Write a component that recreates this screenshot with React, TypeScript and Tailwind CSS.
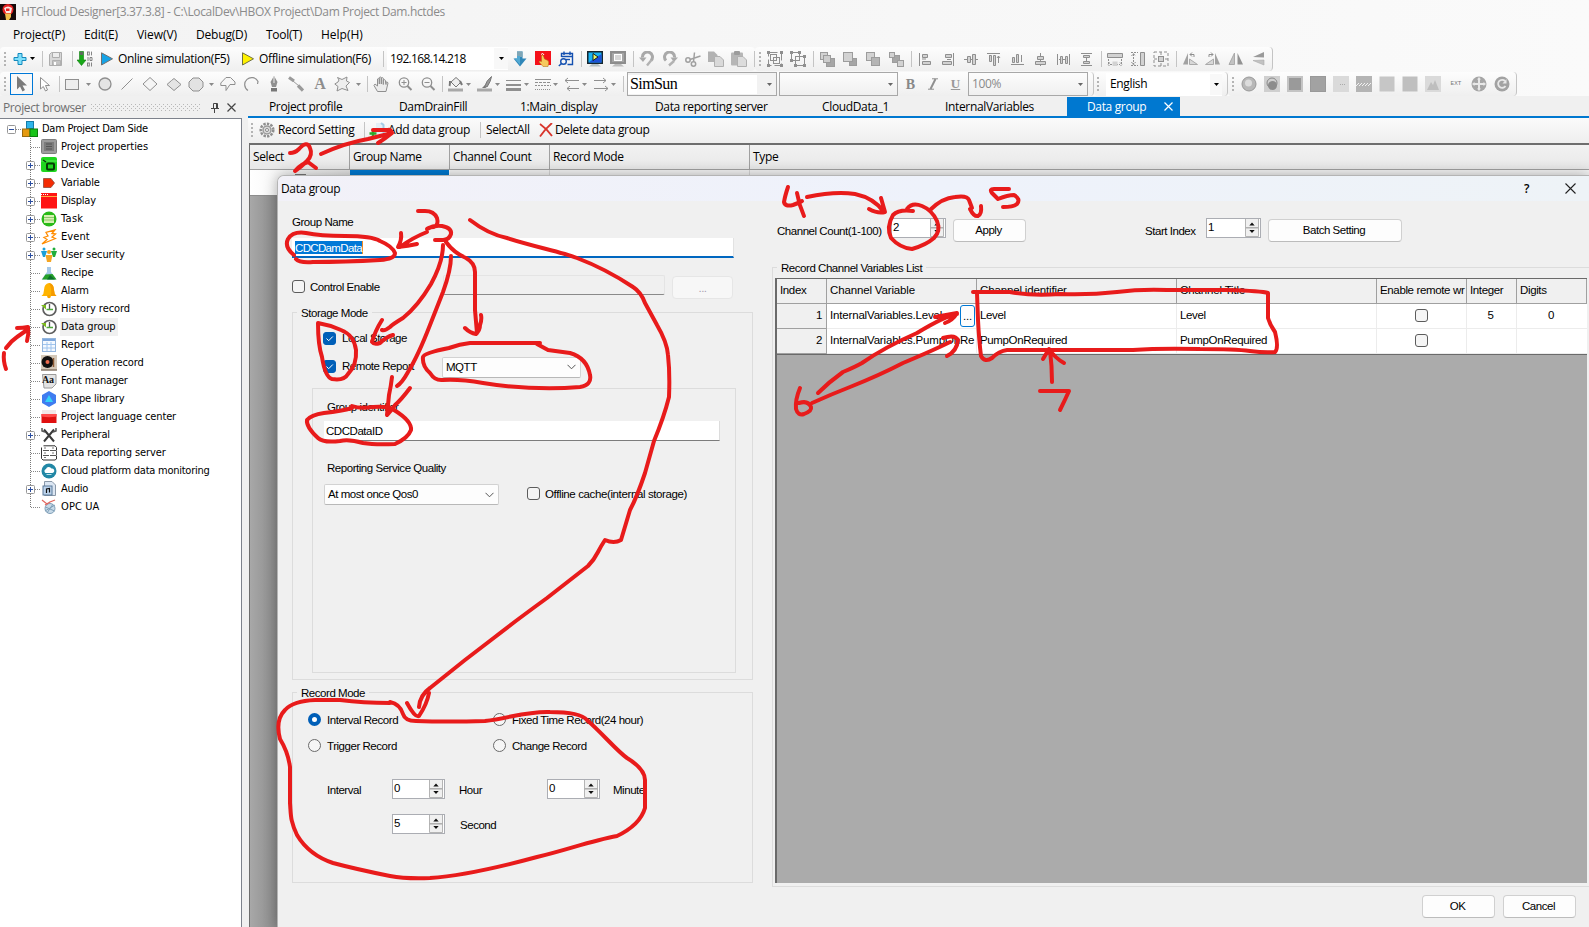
import type { ReactNode } from "react";

/* ---------- text styles ---------- */
const UI = "font-['Open_Sans','Noto_Sans',sans-serif] text-[12px] tracking-[-0.35px] whitespace-nowrap";
const SANS = "font-['Liberation_Sans',sans-serif] text-[11.5px] tracking-[-0.46px] whitespace-nowrap";
const TREE = "font-['DejaVu_Sans_Condensed','DejaVu_Sans',sans-serif] text-[11px] whitespace-nowrap";

/* ---------- small building blocks ---------- */
function Svg({ children, w = 16, h = 16, className = "" }: { children?: ReactNode; w?: number; h?: number; className?: string }) {
  return (
    <svg width={w} height={h} viewBox={`0 0 ${w} ${h}`} className={`block shrink-0 ${className}`} fill="none">
      {children}
    </svg>
  );
}

function Grip({ className = "" }: { className?: string }) {
  return (
    <Svg w={3} h={16} className={className}>
      {[0, 4, 8, 12].map((y) => (
        <rect key={y} x="0" y={y + 1} width="2" height="2" fill="#b4b4b4" />
      ))}
    </Svg>
  );
}

const Sep = ({ className = "ml-[7px] mr-[5px]" }: { className?: string }) => (
  <div className={`h-4 w-px shrink-0 bg-[#c4c4c4] ${className}`} />
);

const Group = ({ children, className = "" }: { children: ReactNode; className?: string }) => (
  <div className={`flex shrink-0 items-center gap-[7px] ${className}`}>{children}</div>
);

const Caret = ({ color = "#8a8a8a", className = "" }: { color?: string; className?: string }) => (
  <Svg w={5} h={3} className={className}>
    <path d="M0 0H5L2.5 3Z" fill={color} />
  </Svg>
);

const G = "#8f8f8f";
const L = "#d2d2d2";

/* ---------- first toolbar icons ---------- */
const Stack = ({ squares }: { squares: [number, number, number, string][] }) => (
  <Svg>
    {squares.map(([p, q, size, fill], i) => <rect key={i} x={p + 0.5} y={q + 0.5} width={size} height={size} fill={fill} stroke="#9c9c9c" />)}
  </Svg>
);

function Toolbar1() {
  return (
    <div className="flex h-[25px] items-center pr-2">
      <div className="flex h-6 shrink-0 items-center rounded-sm bg-gradient-to-b from-[#fdfdfd] to-[#efefef] pl-[4px]">
        <Grip />
        <Svg w={14} h={14} className="ml-[6px]">
          <path d="M5 1.5H9V5.5H13V8.5H9V12.5H5V8.5H1V5.5H5Z" fill="#7fe0fb" stroke="#1389bd" />
        </Svg>
        <Caret color="#000" className="ml-[3px]" />
        <Sep className="ml-[7px]" />
        <Svg className="ml-[5px]">
          <path d="M1.500 3.500L3.500 1.500H13.500V14.500H1.500Z" fill="#d8d8d8" stroke="#adadad" />
          <path d="M4.500 1.500H11.500V6.500H4.500Z" fill="#ececec" stroke="#adadad" />
          <path d="M4.500 9.500H12.500V14H4.500Z" fill="#c4c4c4" stroke="#b0b0b0" />
          <path d="M6 11H8V14H6Z" fill="#fff" />
        </Svg>
        <Sep className="ml-2" />
        <Svg className="ml-1">
          <path d="M2.500 0.500H6.500V9H9L4.500 14.500L0 9H2.500Z" fill="#18a818" stroke="#0c7a0c" strokeWidth=".6" />
          <path d="M3 1H6V4H3Z" fill="#5d6b5d" />
          <g stroke="#777" strokeWidth=".9">
            <rect x="10.500" y="1" width="1.800" height="3" /><path d="M14.500 .6V4.400M11 6V10M13 6.500H15V9.500H13ZM14.500 11.500V15.500" />
            <rect x="10.500" y="12" width="1.800" height="3" />
          </g>
        </Svg>
        <Svg w={14} h={14} className="ml-[7px]">
          <path d="M1.500 .8L12.500 6.800L1.500 13Z" fill="#16a3e6" stroke="#707070" />
        </Svg>
        <div className={`${UI} ml-1 w-[113px] tracking-[-0.22px]`}>Online simulation(F5)</div>
        <Svg w={14} h={14} className="ml-[10px]">
          <path d="M1.500 .8L12.500 6.800L1.500 13Z" fill="#fff200" stroke="#707040" />
        </Svg>
        <div className={`${UI} ml-1 w-[114px] tracking-[-0.2px]`}>Offline simulation(F6)</div>
        <Sep className="ml-[10px]" />
        <div className="ml-[3px] flex h-[23px] w-[121px] items-center justify-between bg-white pl-[3px]">
          <span className={`${UI} tracking-[-0.66px]`}>192.168.14.218</span>
          <span className="flex h-[21px] w-[14px] items-center justify-center bg-[#f8f8f8]"><Caret color="#000" /></span>
        </div>
        <Group className="ml-1">
          <Svg>
            <path d="M5 .5H10.500V7.500H14.500L8 15.500L1.500 7.500H5Z" fill="#2f86b8" />
            <path d="M5 .5H10.500V6H5Z" fill="#7fa6b6" />
            <path d="M5 5H8V14L2.500 7.500H5Z" fill="#51a9d3" />
          </Svg>
          <Svg>
            <rect width="16" height="14" fill="#f5101a" />
            <path d="M6 3.500Q8 1 9 4" stroke="#fff" />
            <path d="M6.500 4.500Q7.500 3.500 8.300 4.500L9.500 8L13 9.500Q14.500 11 13 15.500H8L4 11Q4 9.500 6.500 10.500Z" fill="#f6c95e" stroke="#a86a10" strokeWidth=".5" />
          </Svg>
          <Svg>
            <g stroke="#1450b0" strokeWidth="1.400"><path d="M3.500 6V2.500H14.500V13.500H9.500M3.500 5.500H14.500M6 .5V4M12 .5V4" /><circle cx="5.500" cy="10.500" r="2.800" /><path d="M3.500 12.500L.8 15" /><path d="M8 8.500H12" /></g>
          </Svg>
        </Group>
        <Sep />
        <Group>
          <Svg>
            <rect x="0" y="0" width="16" height="13" fill="#17262e" />
            <path d="M1.500 1.500H14.500V11.500H1.500Z" fill="#18b4f4" /><path d="M1.500 11.500L14.500 3V11.500Z" fill="#1c50d8" />
            <path d="M6 2.500L11 6L6 9.500Z" fill="#e8f86c" stroke="#111" strokeWidth=".9" />
            <path d="M5 13H11L14 15.500H2Z" fill="#b4c0c4" />
          </Svg>
          <Svg>
            <rect x="0" y="0" width="16" height="13" fill="#8d8d8d" /><rect x="2" y="2" width="12" height="9" fill="#a5a5a5" />
            <rect x="4.500" y="3.500" width="7" height="6" fill="#d6d6d6" stroke="#fff" /><path d="M5 13H11L14 15.500H2Z" fill="#bdbdbd" />
          </Svg>
        </Group>
        <Sep />
        <Group>
          <Svg><path d="M12 9.500A5 5 0 1 0 3.500 6.500" stroke="#a9a9a9" strokeWidth="3" /><path d="M0 6.500H7.500L4 11Z" fill="#a9a9a9" /><path d="M12.500 9L8 14.500" stroke="#b2b2b2" strokeWidth="2.400" /></Svg>
          <Svg><path d="M4 9.500A5 5 0 1 1 12.500 6.500" stroke="#a9a9a9" strokeWidth="3" /><path d="M16 6.500H8.500L12 11Z" fill="#a9a9a9" /><path d="M12 10L7 14.500" stroke="#b2b2b2" strokeWidth="2.400" /></Svg>
          <Svg><g stroke="#a0a0a0" strokeWidth="1.500"><circle cx="3" cy="9" r="2.200" /><circle cx="8.500" cy="13" r="2.200" /><path d="M5 8.500L15.500 5M8.500 11L9.500 1.500" /></g></Svg>
          <Svg><path d="M0 .5H6L9.500 4V11H0Z" fill="#b2b2b2" /><path d="M6.500 5.500H12L15.500 9V15.500H6.500Z" fill="#d9d9d9" stroke="#b0b0b0" /></Svg>
          <Svg><rect y="1.500" width="12" height="13" rx="1" fill="#b6b6b6" /><rect x="3" width="6" height="4" rx="1" fill="#9c9c9c" /><path d="M6.500 5.500H12L15.500 9V15.500H6.500Z" fill="#dcdcdc" stroke="#b0b0b0" /></Svg>
        </Group>
        <Sep className="ml-[7px]" />
      </div>
      <div className="flex h-6 shrink-0 items-center rounded-sm border-r border-[#c4c4c4] bg-gradient-to-b from-[#fdfdfd] to-[#efefef] pl-[4px] pr-[7px]">
        <Grip />
        <Group className="ml-[5px]">
          <Svg><g stroke={G}><path d="M1.500 1.500H14.500V14.500H1.500Z" strokeDasharray="9 3" /><rect x="3.500" y="3.500" width="6" height="6" /><rect x="6.500" y="6.500" width="6" height="6" /></g><path d="M0 0H3V3H0ZM13 0H16V3H13ZM0 13H3V16H0ZM13 13H16V16H13Z" fill={G} /></Svg>
          <Svg><g stroke={G}><rect x="1.500" y="1.500" width="8" height="8" /><rect x="5.500" y="5.500" width="9" height="9" /></g><path d="M0 0H3V3H0ZM8 0H11V3H8ZM0 8H3V11H0ZM13 4H16V7H13ZM4 13H7V16H4ZM13 13H16V16H13Z" fill={G} /></Svg>
        </Group>
        <Sep />
        <Group>
          <Stack squares={[[1, 1, 7, L], [7, 7, 8, "#a6a6a6"], [4, 4, 7, "#cdcdcd"]]} />
          <Stack squares={[[7, 7, 7, "#a6a6a6"], [1, 1, 9, L]]} />
          <Stack squares={[[1, 1, 8, L], [6, 6, 8, "#b4b4b4"]]} />
          <Stack squares={[[4, 4, 7, "#a6a6a6"], [1, 1, 5, L], [9, 9, 6, L]]} />
        </Group>
        <Sep />
        <Group>
          <Svg><path d="M2.500 2V15M5 4.500H11M5 8H9M5 12.500H13" stroke={G} /><path d="M5.500 3.500H10.500V6.500H5.500ZM5.500 10.500H13.500V13.500H5.500Z" fill={L} stroke={G} /></Svg>
          <Svg><path d="M13.500 2V15M7 8.500H11" stroke={G} /><path d="M5.500 3.500H11.500V6.500H5.500ZM2.500 10.500H11.500V13.500H2.500Z" fill={L} stroke={G} /></Svg>
          <Svg><path d="M1 8.500H15" stroke={G} /><path d="M4.500 5.500H7.500V11.500H4.500ZM9.500 3.500H12.500V13.500H9.500Z" fill={L} stroke={G} /></Svg>
          <Svg><path d="M1 2.500H14M3.500 4V8M12.500 5V12M11 7L12.500 5L14 7" stroke={G} /><path d="M7.500 4.500H9.500V14.500H7.500ZM3.500 4.500H5.500V10.500H3.500Z" fill={L} stroke={G} /></Svg>
          <Svg><path d="M2 13.500H15M12.500 4V11" stroke={G} /><path d="M7.500 3.500H9.500V11.500H7.500ZM3.500 6.500H5.500V11.500H3.500Z" fill={L} stroke={G} /></Svg>
          <Svg><path d="M8.500 2V15" stroke={G} /><path d="M5.500 5.500H11.500V8.500H5.500ZM3.500 10.500H13.500V13.500H3.500Z" fill={L} stroke={G} /></Svg>
          <Svg><path d="M2.500 3V14M14.500 3V14M4 8.500H13" stroke={G} /><path d="M5.500 5.500H7.500V12.500H5.500ZM10.500 5.500H12.500V12.500H10.500Z" fill={L} stroke={G} /></Svg>
          <Svg><path d="M3 2.500H14M3 14.500H14M8.500 4V13" stroke={G} /><path d="M5.500 4.500H11.500V6.500H5.500ZM5.500 10.500H11.500V12.500H5.500Z" fill={L} stroke={G} /></Svg>
        </Group>
        <Sep />
        <Group>
          <Svg><path d="M.5 2.500H15.500V6.500H.5Z" fill={L} stroke={G} /><path d="M1.500 8V13M14.500 8V13M3 13.500H13M3 11.500L1 13.500L3 15.500M13 11.500L15 13.500L13 15.500" stroke={G} strokeDasharray="2 1" /><path d="M5.500 10.500H10.500V15H5.500Z" fill={L} /></Svg>
          <Svg><path d="M10.500 1.500H14.500V14.500H10.500Z" fill={L} stroke={G} /><path d="M1 1.500H8M1 14.500H8M3.500 3V13M1.500 5L3.500 2.500L5.500 5M1.500 11L3.500 14L5.500 11" stroke={G} strokeDasharray="2 1" /></Svg>
          <Svg><rect x="1" y="1" width="14" height="14" stroke={G} strokeDasharray="3 2" /><rect x="5.500" y="5.500" width="5" height="5" fill={L} stroke={G} /><path d="M8 1V4M8 12V15M1 8H4M12 8H15" stroke={G} /></Svg>
        </Group>
        <Sep />
        <Group>
          <Svg><path d="M1 13.500L6 2V13.500Z" fill="#a2a2a2" /><path d="M7.500 8L15.500 13.500H7.500Z" fill="#d8d8d8" stroke="#aaa" /><path d="M8 3.500H12V6M10 1.500L8 3.500L10 5.500" stroke={G} /></Svg>
          <Svg><path d="M15 13.500L10 2V13.500Z" fill="#a2a2a2" /><path d="M8.500 8L.5 13.500H8.500Z" fill="#d8d8d8" stroke="#aaa" /><path d="M4 6V3.500H8M6 1.500L8 3.500L6 5.500" stroke={G} /></Svg>
          <Svg><path d="M1 13.500L6.500 2V13.500Z" fill="#c2c2c2" stroke="#aaa" /><path d="M15 13.500L9.500 2V13.500Z" fill="#929292" /></Svg>
          <Svg w={14}><path d="M2 6L13 1V6.500Z" fill="#9a9a9a" /><path d="M2 9.500L13 14V9Z" fill="#c2c2c2" stroke="#aaa" strokeWidth=".6" /></Svg>
        </Group>
      </div>
    </div>
  );
}

/* ---------- second toolbar ---------- */
const Shade = ({ fill, stroke = "none" }: { fill: string; stroke?: string }) => (
  <Svg><rect x=".5" y=".5" width="15" height="15" fill={fill} stroke={stroke} /></Svg>
);

function Toolbar2() {
  return (
    <div className="flex h-[25px] items-end">
      <div className="flex h-6 w-[1094px] shrink-0 items-center rounded-sm border-r border-[#c4c4c4] bg-gradient-to-b from-[#fdfdfd] to-[#efefef] pl-[4px]">
        <Grip />
        <div className="ml-[3px] flex h-[22px] w-[23px] shrink-0 items-center justify-center border border-[#0078d7] bg-[#f8f8f8]">
          <Svg><path d="M3 0V13.500L6 10.500L8.500 15.500L11 14L8.500 9.500H13Z" fill="#7b7b7b" /></Svg>
        </div>
        <Svg className="ml-[4px]"><path d="M3.500 1.500V13L6.300 10.500L8.500 15L10.500 14L8.500 9.500H12.500Z" stroke={G} fill="#fff" /></Svg>
        <Sep className="ml-[6px]" />
        <Svg w={14} className="ml-[5px]"><rect x=".5" y="3.500" width="13" height="10" stroke={G} fill="#ededed" /></Svg>
        <Caret className="ml-[7px]" />
        <Svg w={14} className="ml-[7px]"><circle cx="7" cy="8" r="6" stroke={G} strokeWidth="1.300" fill="#e4e4e4" /></Svg>
        <Svg w={12} className="ml-[9px]"><path d="M.5 13.500L11.500 2.500" stroke={G} /></Svg>
        <Svg className="ml-[9px]"><path d="M8 1.500L15 8L8 14.500L1 8Z" stroke={G} fill="#f5f5f5" /></Svg>
        <Svg className="ml-[8px]"><path d="M1 8.500L5.500 4.500L8 2.500L11 5L15 8.500L8 14.500Z" stroke={G} fill="#e4e4e4" /></Svg>
        <Svg className="ml-[6px]"><path d="M5 2H11L15 6V11L11 15H5L1 11V6Z" stroke={G} fill="#e2e2e2" /></Svg>
        <Caret className="ml-[5px]" />
        <Svg className="ml-[6px]"><path d="M6 14.500V9.500H.8V7L6 1.500H10.500L15 6V8.500H10L6 14.500Z" stroke={G} fill="#f6f6f6" /></Svg>
        <Svg className="ml-[7px]"><path d="M5 14.500A7 7 0 1 1 15 5.500L14.500 8" stroke={G} strokeWidth="1.200" /></Svg>
        <Svg w={12} className="ml-[9px]"><path d="M6 0L9.500 6L8 11H4L2.500 6Z" fill={G} /><path d="M6 1V7" stroke="#eee" /><path d="M3 12H9V15.500H3Z" fill="#777" /></Svg>
        <Svg className="ml-[8px]"><path d="M1 1.500L6 5M10 9.500L15 14.500" stroke="#9a9a9a" strokeWidth="3.200" /><path d="M5 5L11 10" stroke="#999" /></Svg>
        <div className="ml-[9px] w-[14px] shrink-0 text-center font-['Liberation_Serif',serif] text-[16px] font-bold leading-none text-[#8d8d8d]">A</div>
        <Svg className="ml-[7px]"><path d="M5 4L3.500 1.500L8 3.500L13 1L12.500 5L15.500 6.500L12 10L14 14.500L8 12.500L3 15L4 10.500L.8 8L4 6Z" stroke={G} fill="#eee" /></Svg>
        <Caret className="ml-[6px]" />
        <Sep className="ml-[6px]" />
        <Svg className="ml-[5px]">
          <path d="M4.500 15.500L1 9.500L2 8L4.500 10V3Q5.500 2 6.300 3V8V1.500Q7.300 .5 8.300 1.500V8V2Q9.300 1 10.300 2.200V8.500V4Q11.500 3 12.300 4.200L13 8.500V6Q14.500 5.500 15 7L13 15.500Z" stroke={G} fill="#ececec" strokeLinejoin="round" />
        </Svg>
        <Svg w={15} className="ml-[9px]"><circle cx="6" cy="6.500" r="4.700" stroke={G} strokeWidth="1.300" /><path d="M9.500 10L13.500 14" stroke={G} strokeWidth="2" /><path d="M3.500 6.500H8.500M6 4V9" stroke={G} /></Svg>
        <Svg w={15} className="ml-[8px]"><circle cx="6" cy="6.500" r="4.700" stroke={G} strokeWidth="1.300" /><path d="M9.500 10L13.500 14" stroke={G} strokeWidth="2" /><path d="M3.500 6.500H8.500" stroke={G} /></Svg>
        <Sep className="ml-[6px]" />
        <Svg className="ml-[5px]"><path d="M3 6L8 1.500L13 6L8 11Z" fill="#eee" stroke="#777" /><path d="M2 5Q2 9 1.500 10M12 5L14 9" stroke="#777" strokeWidth="2" /><rect y="12.500" width="15" height="3" fill="#a8a8a8" /></Svg>
        <Caret className="ml-[2px]" />
        <Svg className="ml-[6px]"><path d="M14.500 .5Q9 5 8 10L10 11Q14 5 14.500 .5Z" fill="#999" stroke="#777" /><path d="M8 9L5 12H9Z" fill="#777" /><rect y="12.500" width="15" height="3" fill="#a8a8a8" /></Svg>
        <Caret className="ml-[2px]" />
        <Svg className="ml-[6px]"><path d="M0 4.500H15" stroke={G} /><path d="M0 9H15" stroke={G} strokeWidth="2" /><path d="M0 13.500H15" stroke={G} strokeWidth="3" /></Svg>
        <Caret className="ml-[2px]" />
        <Svg className="ml-[6px]"><path d="M0 3.500H16" stroke={G} /><path d="M0 6.500H16" stroke={G} strokeDasharray="3 1" /><path d="M0 9.500H16" stroke={G} strokeDasharray="2 1" /><path d="M0 13.500H16" stroke={G} strokeDasharray="1 1" /></Svg>
        <Caret className="ml-[2px]" />
        <Svg className="ml-[6px]"><path d="M1 4.500H15M4 2L1 4.500L4 7M3 12.500H15M6 10L3 12.500L6 15" stroke={G} /></Svg>
        <Caret className="ml-[2px]" />
        <Svg className="ml-[6px]"><path d="M1 4.500H13M10 2L13 4.500L10 7M1 12.500H15M12 10L15 12.500L12 15" stroke={G} /></Svg>
        <Caret className="ml-[2px]" />
        <Sep className="ml-[7px]" />
        <div className="ml-[3px] flex h-6 w-[150px] shrink-0 items-center justify-between border border-[#a8a8a8] bg-[#f2f2f2] pr-1">
          <span className="h-[19px] w-[129px] bg-white pl-[2px] font-['Liberation_Serif',serif] text-[16px] leading-[18px] tracking-[-0.6px]">SimSun</span>
          <Caret color="#666" />
        </div>
        <div className="ml-[2px] flex h-6 w-[119px] shrink-0 items-center justify-end border border-[#a8a8a8] pr-1"><Caret color="#666" /></div>
        <div className="ml-[7px] w-[11px] shrink-0 text-center font-['Liberation_Serif',serif] text-[14px] font-bold text-[#888]">B</div>
        <Svg w={12} h={12} className="ml-[11px]"><path d="M5 .8H11M1 11.200H7" stroke={G} /><path d="M8.500 1L3.500 11" stroke={G} strokeWidth="2" /></Svg>
        <div className="ml-[11px] w-[11px] shrink-0 text-center font-['Liberation_Serif',serif] text-[13px] font-bold text-[#999] underline">U</div>
        <div className="ml-[7px] flex h-6 w-[120px] shrink-0 items-center justify-between border border-[#a8a8a8] pl-[3px] pr-1">
          <span className={`${UI} text-[#8a8a8a]`}>100%</span><Caret color="#666" />
        </div>
      </div>
      <div className="flex h-6 shrink-0 items-center rounded-sm border-r border-[#c4c4c4] bg-gradient-to-b from-[#fdfdfd] to-[#efefef] pl-[3px] pr-[5px]">
        <Grip />
        <div className="ml-[6px] flex h-[23px] w-[116px] items-center justify-between bg-white pl-1">
          <span className={UI}>English</span>
          <span className="flex h-[21px] w-3 items-center justify-center bg-[#f8f8f8]"><Caret color="#000" /></span>
        </div>
      </div>
      <div className="flex h-6 shrink-0 items-center rounded-sm border-r border-[#c4c4c4] bg-gradient-to-b from-[#fdfdfd] to-[#efefef] pl-[4px] pr-[6px]">
        <Grip />
        <Group className="ml-[6px]">
          <Svg><circle cx="8" cy="8" r="7" fill="#b8b8b8" stroke="#999" /><circle cx="7.500" cy="7" r="3.500" fill="#dcdcdc" /></Svg>
          <Svg><rect width="16" height="16" fill="#cfcfcf" /><circle cx="8" cy="7" r="5" stroke="#888" /><circle cx="8.500" cy="9.500" r="4.500" fill="#8c8c8c" /></Svg>
          <Svg><rect x="1" y="1" width="14" height="14" fill="#9a9a9a" stroke="#c4c4c4" strokeWidth="2" /></Svg>
          <Shade fill="#a2a2a2" stroke="#999" />
          <Svg><rect width="16" height="16" fill="#dadada" /><path d="M7 8.500H13" stroke="#aaa" strokeDasharray="1 1" /></Svg>
          <Svg><rect width="16" height="16" fill="#b4b4b4" /><path d="M0 10L3 7M3 10L6 7M6 10L9 7M9 10L12 7M12 10L15 7" stroke="#f2f2f2" /></Svg>
          <Shade fill="#c6c6c6" />
          <Shade fill="#bfbfbf" />
          <Svg><rect width="16" height="16" fill="#dadada" /><path d="M2 14L6 6L8 9L10 4L14 14Z" fill="#bebebe" /></Svg>
          <span className="w-4 text-center font-['Liberation_Mono',monospace] text-[6px] leading-none text-[#777]">EXT</span>
          <Svg><circle cx="8" cy="8" r="7.500" fill="#a6a6a6" /><path d="M8 1L10 3.500H9V7H12.500V6L15 8L12.500 10V9H9V12.500H10L8 15L6 12.500H7V9H3.500V10L1 8L3.500 6V7H7V3.500H6Z" fill="#e8e8e8" /></Svg>
          <Svg><circle cx="8" cy="8" r="7.500" fill="#a2a2a2" /><path d="M11.500 10A4 4 0 1 1 11 5" stroke="#e8e8e8" strokeWidth="1.800" /><path d="M12.500 3V7.500H8.500Z" fill="#e8e8e8" /></Svg>
        </Group>
      </div>
    </div>
  );
}

/* ---------- project tree ---------- */
const Clock = () => (
  <Svg><circle cx="8.500" cy="8" r="6.500" fill="#fff" stroke="#5f5f5f" strokeWidth="1.700" /><path d="M8.500 3V9" stroke="#555" strokeWidth="1.300" /><path d="M5.500 8.500H12" stroke="#4fa83c" strokeWidth="1.500" /><path d="M0 4H5V8.500Z" fill="#7dbb1e" /></Svg>
);

const TREE_ITEMS: { label: string; plus?: boolean; selected?: boolean; track: string; icon: ReactNode }[] = [
  { label: "Project properties", track: "tracking-[-0.02px]", icon: <Svg><rect x=".5" y=".5" width="15" height="14" rx="1" fill="#9c9c9c" stroke="#7e7e7e" /><rect x="3" y="3" width="10" height="9" fill="#7c7c7c" /><path d="M5 5H11M5 7.500H11M5 10H11" stroke="#555" /></Svg> },
  { label: "Device", plus: true, track: "tracking-[-0.1px]", icon: <Svg><rect width="16" height="15" rx="2" fill="#1fd61f" /><path d="M0 4H16" stroke="#5cf05c" /><rect x="6" y="6.500" width="7" height="6" rx="1" stroke="#073b07" strokeWidth="2" /><path d="M2 3L5 5" stroke="#073b07" strokeWidth="1.500" /></Svg> },
  { label: "Variable", plus: true, track: "tracking-[-0.15px]", icon: <Svg><path d="M2.500 3.500H10L13.500 8L10 12.500H2.500Z" fill="#f42c04" stroke="#8f4b3c" strokeWidth=".8" /></Svg> },
  { label: "Display", plus: true, track: "tracking-[-0.25px]", icon: <Svg><rect width="16" height="15.500" fill="#ff1414" /><path d="M0 1.500H7" stroke="#fff" strokeDasharray="1 1" /><path d="M0 3.500H16" stroke="#ffae42" /></Svg> },
  { label: "Task", plus: true, track: "tracking-[0.3px]", icon: <Svg><circle cx="8" cy="8" r="7.500" fill="#29ba18" /><rect x="3" y="4" width="10" height="8" fill="#d8f0b4" /><path d="M3 6.500H13M3 9H13" stroke="#8cc86a" /></Svg> },
  { label: "Event", plus: true, track: "tracking-[0.1px]", icon: <Svg><path d="M14 .8L5 3.500L7 7L3 8.500L6 10.500L1 15L14.500 9.500L11 8L14.500 5L11 4.500Z" fill="#fff" stroke="#ff8c00" strokeWidth="1.300" /></Svg> },
  { label: "User security", plus: true, track: "tracking-[-0.12px]", icon: <Svg><g><circle cx="3" cy="2" r="1.500" fill="#1ca0d8" /><path d="M0 4H6L4 10H2Z" fill="#1ca0d8" /><circle cx="13" cy="2" r="1.500" fill="#1fae3c" /><path d="M10 4H16L14 10H12Z" fill="#1fae3c" /><circle cx="8" cy="5" r="2" fill="#f5a623" /><path d="M4.500 8H11.500L10 15H6Z" fill="#f5a623" /></g></Svg> },
  { label: "Recipe", track: "tracking-[-0.1px]", icon: <Svg><path d="M6 2H10V7L15.500 14.500H.5L6 7Z" fill="#a5c8e8" /><path d="M4.500 9.500L11.500 9L15.500 14.500H1Z" fill="#25a028" /><path d="M9 10L14 14.500H6Z" fill="#0b6f2c" /></Svg> },
  { label: "Alarm", track: "tracking-[-0.3px]", icon: <Svg><path d="M8 0Q13 1 13 7Q13 11 15.500 13H.5Q3 11 3 7Q3 1 8 0Z" fill="#ffb400" /><path d="M8 0Q13 1 13 7Q13 11 15.500 13H10Q11 5 8 0Z" fill="#f59a00" /><circle cx="8" cy="13.500" r="1.800" fill="#f7a400" /></Svg> },
  { label: "History record", track: "tracking-[-0.06px]", icon: <Clock /> },
  { label: "Data group", selected: true, track: "tracking-[-0.1px]", icon: <Clock /> },
  { label: "Report", track: "tracking-[0.1px]", icon: <Svg><rect x="1.500" y="1.500" width="13" height="13" fill="#f4f9ff" stroke="#94b6de" /><path d="M2 3H14" stroke="#7ca6dc" strokeWidth="2" /><path d="M2 7.500H14M2 11H14M6 5V14M10 5V14" stroke="#9fc4ee" /></Svg> },
  { label: "Operation record", track: "tracking-[-0.07px]", icon: <Svg><rect width="16" height="15.500" fill="#d4c8b8" /><circle cx="6.500" cy="7" r="6" fill="#111" /><circle cx="6.500" cy="7" r="2" fill="#ef6b4e" /><path d="M12.500 3V12" stroke="#8d5b35" strokeWidth="1.500" /><path d="M0 15H16" stroke="#655446" /></Svg> },
  { label: "Font manager", track: "tracking-[-0.2px]", icon: <Svg><path d="M1.500 1.500H15V11L11 15H3Z" fill="#e3e3e3" stroke="#9a9a9a" /><text x="1" y="10" fontSize="10" fontWeight="700" fontFamily="Liberation Serif" fill="#111" textLength="12">Aa</text></Svg> },
  { label: "Shape library", track: "tracking-[-0.2px]", icon: <Svg><path d="M8 0L15 4V12L8 16L1 12V4Z" fill="#3f7cf0" /><path d="M8 4L12 11H4Z" fill="#35d3f7" /></Svg> },
  { label: "Project language center", track: "tracking-[-0.13px]", icon: <Svg><path d="M1 1H15V5H1Z" fill="#f2e8e8" /><path d="M0.500 5H15.500V14H0.500Z" fill="#e01010" /><path d="M0.500 5H15.500V7.500Q8 9 0.500 7.500Z" fill="#ff4b4b" /></Svg> },
  { label: "Peripheral", plus: true, track: "tracking-[-0.1px]", icon: <Svg><path d="M3 2.500L13 14.500M13 2.500L3 14.500" stroke="#3a3a3a" strokeWidth="2" /><path d="M1 1V4L4 5M15 1V4L12 5" stroke="#555" strokeWidth="1.500" /></Svg> },
  { label: "Data reporting server", track: "tracking-[-0.1px]", icon: <Svg><path d="M2.500 .8H14L15.500 2.500V5.500M.5 2.500V13.500L2 15H14L15.500 14V10.500" stroke="#333" /><path d="M2 5.500H15.500M2 10.500H15.500M15.500 6V10" stroke="#555" strokeDasharray="6 1" /><path d="M3 3H5M11 3H13M3 8H5M11 8H13M3 12.500H5" stroke="#777" /></Svg> },
  { label: "Cloud platform data monitoring", track: "tracking-[-0.25px]", icon: <Svg><circle cx="8" cy="8" r="7.500" fill="#2187a5" /><path d="M4.500 10A2.200 2.200 0 0 1 5 6A3 3 0 0 1 10.500 5.500A2.300 2.300 0 0 1 11.500 10Z" fill="#fff" /><path d="M5.500 11.500H10.500" stroke="#bde3ee" /></Svg> },
  { label: "Audio", plus: true, track: "tracking-[-0.2px]", icon: <Svg><path d="M3.500 .5H11L14.500 4V14.500H3.500Z" fill="#dbe6f3" stroke="#8a98a8" /><rect x="2" y="5" width="9" height="9" fill="#bcd3ec" stroke="#5a7898" /><path d="M5.500 12V8L8.500 7.500V11.500" stroke="#111" strokeWidth="1.200" /></Svg> },
  { label: "OPC UA", track: "tracking-[0.1px]", icon: <Svg><circle cx="9" cy="9.500" r="5" fill="#c8dae8" stroke="#7f9fb8" /><path d="M4 12L14 6M6 14L12 5M4.500 8L13.500 12" stroke="#7f9fb8" /><path d="M1 1L6 5L9 3L14 1M4 6L9 3" stroke="#e0655e" strokeWidth="1.200" /></Svg> },
];

const PlusBox = ({ x, minus }: { x: number; minus?: boolean }) => (
  <g>
    <rect x={x + 0.5} y="5.500" width="8" height="8" rx="1" fill="#fff" stroke="#979797" />
    <path d={minus ? `M${x + 2} 9.500h5` : `M${x + 2} 9.500h5M${x + 4.5} 7v5`} stroke="#2b4ea0" />
  </g>
);

function ProjectTree() {
  return (
    <div className="flex w-[242px] shrink-0 flex-col">
      <div className="flex h-[22px] items-center pl-[3px] pt-px">
        <span className={`${UI} w-[88px] tracking-[-0.38px] text-[#6f6f6f]`}>Project browser</span>
        <Svg w={110} h={7}>
          <path d="M0 .5H110M0 4.500H110" stroke="#b8b8b8" strokeDasharray="1 3" />
          <path d="M2 2.500H110M2 6.500H110" stroke="#b8b8b8" strokeDasharray="1 3" />
        </Svg>
        <Svg w={8} h={10} className="ml-[10px]"><path d="M2.500 5V.5H6.500V5M0 5.500H8M3.500 6V10M5.500 1V5" stroke="#444" /></Svg>
        <Svg w={9} h={9} className="ml-[8px]"><path d="M.5 .5L8.500 8.500M8.500 .5L.5 8.500" stroke="#444" strokeWidth="1.200" /></Svg>
      </div>
      <div className="flex-1 border-r border-t border-[#7d828c] bg-white pt-px">
        <div className="flex h-[18px] items-center">
          <Svg w={22} h={18}><path d="M16 9.500H22" stroke="#888" strokeDasharray="1 1" /><PlusBox x={7} minus /></Svg>
          <Svg><rect x="4.500" y=".5" width="7" height="7" fill="#2fb4ea" stroke="#177ca8" /><rect x=".5" y="8" width="7.500" height="7.500" fill="#e59a10" stroke="#9a6a10" /><rect x="8" y="8" width="7.500" height="7.500" fill="#19c419" stroke="#0d7f0d" /></Svg>
          <span className={`${TREE} ml-1 h-[18px] leading-[18px] tracking-[-0.27px]`}>Dam Project Dam Side</span>
        </div>
        {TREE_ITEMS.map((item, i) => (
          <div key={item.label} className="flex h-[18px] items-center">
            <Svg w={41} h={18}>
              <path d={i === TREE_ITEMS.length - 1 ? "M30.500 0V9" : "M30.500 0V18"} stroke="#777" strokeDasharray="1 1" />
              <path d="M31 9.500H41" stroke="#888" strokeDasharray="1 1" />
              {item.plus && <PlusBox x={26} />}
            </Svg>
            {item.icon}
            <span className={`${TREE} ${item.track} ml-[3px] h-[18px] pl-[1px] pr-[2px] leading-[18px] ${item.selected ? "bg-[#f0f0f0]" : ""}`}>{item.label}</span>
          </div>
        ))}
      </div>
    </div>
  );
}

/* ---------- tabs, record toolbar and group table ---------- */
const Tab = ({ label, place }: { label: string; place: string }) => (
  <div className={`${UI} ${place} shrink-0 tracking-[-0.4px]`}>{label}</div>
);

function Workspace() {
  return (
    <div className="flex min-w-0 flex-1 flex-col">
      <div className="flex h-[22px] items-center border-b-2 border-[#0078d0] pt-px">
        <Tab label="Project profile" place="ml-[21px] w-[74px]" />
        <Tab label="DamDrainFill" place="ml-[56px] w-[68px]" />
        <Tab label="1:Main_display" place="ml-[53px] w-[77px]" />
        <Tab label="Data reporting server" place="ml-[58px] w-[110px]" />
        <Tab label="CloudData_1" place="ml-[57px] w-[66px]" />
        <Tab label="InternalVariables" place="ml-[57px] w-[86px]" />
        <div className="ml-[36px] flex h-[20px] w-[113px] items-center bg-[#0078d0] pl-5 text-white">
          <span className={`${UI} w-[77px]`}>Data group</span>
          <Svg w={9} h={9}><path d="M.5 .5L8.500 8.500M8.500 .5L.5 8.500" stroke="#fff" strokeWidth="1.200" /></Svg>
        </div>
      </div>
      <div className="flex h-[25px] items-center bg-gradient-to-b from-[#fbfbfb] to-[#eeeeee] pb-px pl-[3px]">
        <Grip />
        <Svg className="ml-[5px]">
          <circle cx="8" cy="8" r="6.300" stroke="#8f8f8f" strokeWidth="2.500" strokeDasharray="2.400 1.200" />
          <circle cx="8" cy="8" r="4" fill="#dadada" stroke="#9a9a9a" strokeWidth="1.500" /><circle cx="8" cy="8" r="1.500" fill="#fff" stroke="#888" />
        </Svg>
        <span className={`${UI} ml-[3px] w-[80px]`}>Record Setting</span>
        <Sep className="ml-[6px]" />
        <Svg className="ml-[4px]"><path d="M7 1H15V12H7Z" fill="#e4eef6" /><path d="M12 1L14.500 3V11" stroke="#a5cce6" strokeWidth="2" /><path d="M4 8V15M.5 11.500H7.500" stroke="#2ca82c" strokeWidth="2.500" /></Svg>
        <span className={`${UI} ml-[3px] w-[83px] tracking-[-0.3px]`}>Add data group</span>
        <Sep className="ml-[9px]" />
        <span className={`${UI} ml-[5px] w-[45px] tracking-[-0.15px]`}>SelectAll</span>
        <Svg w={14} h={14} className="ml-2"><path d="M1 1Q8 6 13 13M13 0Q6 6 1 13.500" stroke="#d8352c" strokeWidth="1.800" /></Svg>
        <span className={`${UI} ml-[2px] tracking-[-0.37px]`}>Delete data group</span>
      </div>
      <div className="ml-px flex flex-1 flex-col border-l border-t-2 border-[#6e6e6e] bg-[#a3a3a3]">
        <div className={`${UI} grid h-[25px] grid-cols-[100px_100px_100px_200px_1fr] border-b border-[#a0a0a0] bg-gradient-to-b from-[#f2f2f2] to-[#e8e8e8] text-[11px] leading-[23px] tracking-[-0.3px]`}>
          <div className="border-r border-[#a0a0a0] pl-[3px]">Select</div>
          <div className="border-r border-[#a0a0a0] pl-[3px]">Group Name</div>
          <div className="border-r border-[#a0a0a0] pl-[3px]">Channel Count</div>
          <div className="border-r border-[#a0a0a0] pl-[3px]">Record Mode</div>
          <div className="pl-[3px]">Type</div>
        </div>
        <div className="grid h-[26px] grid-cols-[100px_100px_100px_200px_1fr] border-b border-[#8c8c8c] bg-[#f3f3f3]">
          <div className="flex justify-center bg-gradient-to-r from-white to-[#e2e2e2] pt-[4px]"><span className="h-px w-[11px] bg-[#777]" /></div>
          <div className="border-r border-white bg-[#0078d0]" />
          <div className="border-r border-[#d6d6d6]" />
          <div className="border-r border-[#d6d6d6]" />
          <div />
        </div>
        <div className="w-[28px] flex-1 bg-gradient-to-r from-[#a8a8a8] to-[#8a8a8a]" />
      </div>
    </div>
  );
}

/* ---------- dialog controls ---------- */
const Button = ({ children, className }: { children: ReactNode; className: string }) => (
  <div className={`${SANS} flex shrink-0 items-center justify-center rounded-[4px] border border-[#d0d0d0] border-b-[#bcbcbc] bg-[#fdfdfd] pr-[2px] pt-px ${className}`}>{children}</div>
);

const Check = ({ on, className = "" }: { on?: boolean; className?: string }) => (
  <Svg w={13} h={13} className={className}>
    <rect x=".5" y=".5" width="12" height="12" rx="2.500" fill={on ? "#005fb8" : "#f5f5f5"} stroke={on ? "#005fb8" : "#5c5c5c"} />
    {on && <path d="M3.500 6.500L5.700 8.700L9.800 4.500" stroke="#fff" />}
  </Svg>
);

const Radio = ({ on }: { on?: boolean }) => (
  <Svg w={13} h={13} className="-mt-[2px]">
    {on ? <circle cx="6.500" cy="6.500" r="4.500" stroke="#005fb8" strokeWidth="4" fill="#fff" /> : <circle cx="6.500" cy="6.500" r="6" stroke="#6a6a6a" fill="#f6f6f6" />}
  </Svg>
);

const Choice = ({ on, label, className = "" }: { on?: boolean; label: string; className?: string }) => (
  <div className={`flex h-[18px] items-center gap-[6px] ${className}`}>
    <Radio on={on} />
    <span className="pt-px">{label}</span>
  </div>
);

const Spin = ({ value, className = "w-[53px]" }: { value: string; className?: string }) => (
  <div className={`flex h-5 shrink-0 justify-between border border-[#abadb3] bg-white ${className}`}>
    <span className={`${SANS} pl-[1px] leading-[16px]`}>{value}</span>
    <Svg w={15} h={18}>
      <path d="M.5 0V17.500H13.500V0M0 8.500H14" fill="#f0f0f0" stroke="#b4b4b4" />
      <path d="M0 8.800H14" stroke="#b0b0b0" strokeWidth="1.500" />
      <path d="M7 3.500L9.700 6.500H4.300ZM7 14L9.700 11H4.300Z" fill="#111" />
    </Svg>
  </div>
);

const Combo = ({ value, className }: { value: string; className: string }) => (
  <div className={`${SANS} flex h-[21px] shrink-0 items-center justify-between rounded-[2px] border border-[#d2d2d2] border-b-[#b8b8b8] bg-[#fdfdfd] pl-[3px] pr-[4px] ${className}`}>
    <span className="pt-px">{value}</span>
    <Svg w={9} h={6}><path d="M.5 .8L4.500 4.800L8.500 .8" stroke="#555" /></Svg>
  </div>
);

const GroupBox = ({ title, className, children }: { title?: string; className: string; children?: ReactNode }) => (
  <div className={`flex flex-col border border-[#dcdcdc] ${className}`}>
    {title && <div className={`${SANS} -mt-[7px] ml-1 h-4 self-start bg-[#f0f0f0] px-1 leading-[14px]`}>{title}</div>}
    {children}
  </div>
);

function LeftPane() {
  return (
    <div className={`${SANS} ml-[14px] flex w-[461px] shrink-0 flex-col pt-[14px]`}>
      <div className="h-[14px] leading-[14px]">Group Name</div>
      <div className="mt-[9px] flex h-5 w-[442px] items-start border-b-2 border-r border-b-[#0067c0] border-r-[#e2e2e2] bg-white pl-[3px] pt-[3px]">
        <span className="h-[13px] w-[68px] border-r border-[#f08a24] bg-[#0078d7] leading-[14px] tracking-[-0.65px] text-white">CDCDamData</span>
      </div>
      <div className="mt-[17px] flex h-6 items-center">
        <Check className="-mt-[2px]" />
        <span className="ml-[5px] w-[71px] pt-px">Control Enable</span>
        <div className="ml-[62px] h-5 w-[222px] -translate-y-[2px] rounded-[2px] border border-[#e4e4e4] border-b-[#8a8a8a] bg-[#f0f0f0]" />
        <div className="ml-[7px] flex h-[23px] w-[61px] items-center justify-center rounded-[4px] border border-[#e6e6e6] bg-[#f7f7f7] pt-1 text-[#a8a0b0]">...</div>
      </div>
      <GroupBox title="Storage Mode" className="mt-[13px] h-[368px]">
        <div className="flex h-[26px] items-center pl-[30px] pt-[7px]">
          <Check on /><span className="ml-[6px] pt-px">Local Storage</span>
        </div>
        <div className="mt-[8px] flex h-[22px] items-center pl-[30px]">
          <Check on className="-mt-[2px]" /><span className="ml-[6px] w-[73px]">Remote Report</span>
          <Combo value="MQTT" className="ml-[27px] w-[139px]" />
        </div>
        <div className="ml-[19px] mt-[10px] flex h-[285px] w-[424px] flex-col border border-[#dcdcdc]">
          <div className="ml-[14px] mt-[11px] h-[14px] leading-[14px]">Group identifier</div>
          <div className="ml-[11px] mt-[7px] h-5 w-[396px] border-b border-r border-b-[#7c7c7c] border-r-[#dcdcdc] bg-white pl-[2px] leading-[20px]">CDCDataID</div>
          <div className="ml-[14px] mt-[20px] h-[14px] leading-[14px]">Reporting Service Quality</div>
          <div className="ml-[11px] mt-[9px] flex items-center">
            <Combo value="At most once Qos0" className="w-[175px]" />
            <Check className="-mt-[2px] ml-[28px]" />
            <span className="ml-[5px] tracking-[-0.38px]">Offline cache(internal storage)</span>
          </div>
        </div>
      </GroupBox>
      <GroupBox title="Record Mode" className="mt-[12px] h-[191px]">
        <div className="ml-[15px] mt-[9px] grid grid-cols-[185px_1fr]">
          <Choice on label="Interval Record" />
          <Choice label="Fixed Time Record(24 hour)" />
          <Choice label="Trigger Record" className="mt-[8px]" />
          <Choice label="Change Record" className="mt-[8px]" />
        </div>
        <div className="ml-[34px] mt-[24px] flex h-5 items-center">
          <span className="w-[65px] pt-[3px]">Interval</span>
          <Spin value="0" />
          <span className="ml-[14px] w-[88px] pt-[3px]">Hour</span>
          <Spin value="0" />
          <span className="ml-[13px] pt-[3px]">Minute</span>
        </div>
        <div className="ml-[99px] mt-[15px] flex h-5 items-center">
          <Spin value="5" />
          <span className="ml-[15px] pt-[3px]">Second</span>
        </div>
      </GroupBox>
    </div>
  );
}

const COLS = "grid grid-cols-[50px_150px_200px_200px_90px_50px_70px]";

function ChannelRow({ index, children, ident, integer = "", digits = "" }: { index: string; children: ReactNode; ident: string; integer?: string; digits?: string }) {
  return (
    <div className={`${COLS} h-[25px] leading-[22px]`}>
      <div className="border-b border-r border-[#a0a0a0] bg-[#f0f0f0] pr-[4px] text-right">{index}</div>
      <div className="flex border-b border-r border-[#ececec] pl-[3px] tracking-[-0.17px]">{children}</div>
      <div className="border-b border-r border-[#ececec] pl-[3px]">{ident}</div>
      <div className="border-b border-r border-[#ececec] pl-[3px]">{ident}</div>
      <div className="flex items-center justify-center border-b border-r border-[#ececec]"><Check className="-mt-px" /></div>
      <div className="border-b border-r border-[#ececec] pr-[2px] text-center">{integer}</div>
      <div className="border-b border-[#ececec] pr-[2px] text-center">{digits}</div>
    </div>
  );
}

function RightPane() {
  return (
    <div className={`${SANS} ml-[19px] flex flex-1 flex-col`}>
      <div className="mt-[17px] flex h-6 pl-[5px]">
        <span className="w-[114px] pt-[5px]">Channel Count(1-100)</span>
        <Spin value="2" className="w-[55px]" />
        <Button className="ml-[7px] mt-[1px] h-[23px] w-[73px]">Apply</Button>
        <span className="ml-[119px] w-[61px] pt-[5px]">Start Index</span>
        <Spin value="1" className="w-[55px]" />
        <Button className="ml-[7px] mt-[1px] h-[23px] w-[134px] tracking-[-0.4px]">Batch Setting</Button>
      </div>
      <GroupBox title="Record Channel Variables List" className="mt-[25px] h-[620px] border-r-0">
        <div className="ml-[2px] mt-[1px] flex h-[605px] w-[812px] flex-col border-l-2 border-t border-[#6a6a6a] bg-[#ababab] tracking-[-0.36px]">
          <div className={`${COLS} h-[25px] border-b border-[#a0a0a0] bg-[#f0f0f0] leading-[22px]`}>
            <div className="border-r border-[#a0a0a0] pl-[3px]">Index</div>
            <div className="border-r border-[#a0a0a0] pl-[3px] tracking-[-0.15px]">Channel Variable</div>
            <div className="border-r border-[#a0a0a0] pl-[3px] tracking-[-0.15px]">Channel identifier</div>
            <div className="border-r border-[#a0a0a0] pl-[3px] tracking-[-0.15px]">Channel Title</div>
            <div className="border-r border-[#a0a0a0] pl-[3px]">Enable remote wr</div>
            <div className="border-r border-[#a0a0a0] pl-[3px]">Integer</div>
            <div className="border-r border-[#a0a0a0] pl-[3px]">Digits</div>
          </div>
          <div className="border-b border-[#6a6a6a] bg-white">
            <ChannelRow index="1" ident="Level" integer="5" digits="0">
              <span className="w-[130px]">InternalVariables.Level</span>
              <span className="mt-[1px] flex h-[22px] w-[15px] shrink-0 items-center justify-center rounded-[3px] border border-[#0078d4] bg-[#fdfdfd]">...</span>
            </ChannelRow>
            <ChannelRow index="2" ident="PumpOnRequired">InternalVariables.PumpOnRe</ChannelRow>
          </div>
        </div>
      </GroupBox>
      <div className="mt-[8px] flex justify-end gap-[8px] pr-[13px]">
        <Button className="h-[23px] w-[73px]">OK</Button>
        <Button className="h-[23px] w-[73px]">Cancel</Button>
      </div>
    </div>
  );
}

function DataGroupDialog() {
  return (
    <div className="absolute left-[277px] top-[175px] flex h-[752px] w-[1312px] flex-col overflow-hidden rounded-tl-[7px] border-l border-t border-[#b4b4b4] bg-[#f0f0f0] shadow-[0_0_14px_rgba(0,0,0,0.3)]">
      <div className="flex h-[25px] shrink-0 items-center bg-gradient-to-r from-[#f2f1f8] via-[#eef2fb] to-[#eef3f7] pl-[3px]">
        <span className={`${UI} flex-1 pt-px`}>Data group</span>
        <span className="w-[41px] font-['Open_Sans',sans-serif] text-[12px] font-semibold">?</span>
        <Svg w={11} h={11} className="-mt-px mr-[13px]"><path d="M.5 .5L10.500 10.500M10.500 .5L.5 10.500" stroke="#222" strokeWidth="1.100" /></Svg>
      </div>
      <div className="flex flex-1">
        <LeftPane />
        <RightPane />
      </div>
    </div>
  );
}

/* ---------- hand-drawn markup over the window ---------- */
const STROKES = [
  // step 1
  "M4 353Q3 361 6 369",
  "M6 348Q11 341 17 337L27 330M17 328Q23 328 28 327Q29 334 27 341",
  // step 2
  "M290 153Q295 153 299 149Q307 140 310 148Q313 155 307 161Q301 167 295 171Q301 164 308 162L316 168",
  "M321 154Q345 143 368 139L392 133M373 130H388Q391 129 392 133Q386 138 378 143",
  // step 3
  "M418 211H425Q434 211 437 218Q439 225 434 227Q429 227 427 229Q434 225 442 226Q452 228 451 234Q449 240 443 240H435",
  "M427 232Q412 238 400 247M401 233Q402 240 398 247Q408 246 417 244",
  "M294 255Q284 247 288 239Q293 231 306 233Q320 236 345 236Q372 236 380 241Q392 246 395 253Q395 259 380 260Q345 262 313 262Q299 263 296 259",
  "M443 245Q443 262 431 284Q418 306 403 318Q393 324 390 327Q385 331 382 330M382 320Q375 331 372 342Q374 345 380 343Q386 337 393 335",
  "M451 256Q451 270 443 292L430 325Q418 356 408 372Q402 383 397 386",
  "M446 242Q454 253 466 258Q475 263 475 272V310L477 333M465 328Q470 333 476 334Q480 330 480 325Q482 319 481 315",
  "M392 377Q391 386 389 395L387 415M410 388Q401 400 395 405Q391 411 387 415",
  "M318 323Q318 345 322 357Q325 377 332 379Q344 381 348 374Q357 365 356 350Q354 335 341 330Q330 325 318 323",
  "M540 343H470Q460 344 449 348Q424 353 423 357Q422 366 430 373Q435 381 443 380Q460 379 483 383Q535 391 580 387Q592 385 590 375Q587 358 570 353L548 350L537 344",
  "M352 406Q360 409 373 407Q389 406 394 410Q412 421 411 430Q408 438 395 444Q375 445 363 443Q349 439 340 441Q323 443 318 438Q306 427 307 420Q311 415 324 413Q342 411 352 408",
  "M470 220Q488 234 507 238C535 247 562 252 577 258Q606 269 633 287Q641 292 645 303L657 325Q667 342 668 355Q670 373 669 397Q664 417 654 441L645 473Q637 497 630 510L621 540Q614 544 605 540Q601 546 598 552Q594 560 588 566L547 598Q514 622 495 637L465 660L430 688Q420 695 419 707M407 703Q415 718 419 716Q427 704 429 693",
  "M390 702Q400 704 403 714Q405 721 416 721Q447 722 485 721C510 718 527 711 550 712Q580 712 587 720C602 733 617 751 627 758Q645 769 645 780V808Q640 825 617 836C590 841 567 850 537 857C500 867 460 876 430 878Q406 879 390 876C365 871 348 867 333 863Q309 855 297 835C290 820 291 815 290 803V767Q288 752 280 739Q275 720 285 710Q293 701 315 700H340Q363 703 390 703",
  // step 4
  "M788 187Q785 196 784 202Q785 207 793 205Q799 203 802 201M797 193Q799 205 804 216",
  "M807 197Q835 191 855 194Q874 198 884 212M881 198Q883 205 885 212Q878 214 869 209",
  "M913 211Q899 209 893 215Q886 227 891 238Q900 248 912 249Q926 245 934 238Q941 231 937 221Q932 210 922 206Q912 202 907 209",
  // step 5
  "M930 210Q942 198 955 197Q967 195 969 200L972 208M970 209Q974 217 978 216Q982 214 981 206",
  "M1009 189H994Q989 189 992 193L998 199Q1008 195 1014 195Q1021 199 1017 204Q1013 207 1003 207",
  // step 6
  "M818 393Q829 382 843 372Q855 367 862 363Q885 347 917 333Q945 316 957 314M935 317L957 313Q953 320 945 323",
  "M812 403Q832 394 850 387Q880 375 903 363Q934 350 950 342M943 338Q955 334 958 340Q957 351 947 356",
  "M800 388Q795 400 796 409Q798 416 804 414Q812 411 811 407Q808 400 799 403",
  // step 7
  "M973 292H1010Q1030 296 1060 294Q1090 295 1117 292Q1140 289 1167 290H1227Q1262 291 1268 293Q1268 306 1268 318Q1270 325 1275 332Q1279 348 1275 352Q1265 353 1250 351Q1235 349 1200 349Q1160 348 1133 350H1007Q999 351 992 358Q985 363 981 356Q979 340 978 320L977 293",
  "M1052 382Q1052 366 1050 350M1043 359L1049 349Q1055 358 1064 363",
  "M1040 391H1069Q1065 400 1060 410",
];

const Markup = () => (
  <svg width="1589" height="927" viewBox="0 0 1589 927" className="pointer-events-none absolute left-0 top-0" fill="none" stroke="#e81b1b" strokeWidth="4" strokeLinecap="round" strokeLinejoin="round">
    {STROKES.map((d) => <path key={d} d={d} />)}
  </svg>
);

const MENU = [
  ["Project(P)", "w-[52px] tracking-[-0.14px]"],
  ["Edit(E)", "w-[34px] tracking-[-0.15px]"],
  ["View(V)", "w-[40px] tracking-[-0.06px]"],
  ["Debug(D)", "w-[51px] tracking-[-0.18px]"],
  ["Tool(T)", "w-[36px] tracking-[-0.25px]"],
  ["Help(H)", "w-[42px] tracking-[0px]"],
];

export default function App() {
  return (
    <div className="relative flex h-[927px] w-[1589px] flex-col overflow-hidden bg-[#f0f0f0] text-black">
      <div className="flex h-[96px] shrink-0 flex-col bg-gradient-to-r from-[#f3f3f3] to-[#fafafa]">
        <div className="flex h-[23px] items-center">
          <Svg>
            <rect width="16" height="16" fill="#160a0a" /><circle cx="8" cy="5.500" r="5.500" fill="#e62222" />
            <path d="M4 4Q8 1 12 4L11 9H6Z" fill="#fbe9e4" /><path d="M6 4.500H9.500V7H6Z" fill="#e62222" /><path d="M5 9.500H11V13L9 16H6Z" fill="#f2c14c" />
          </Svg>
          <span className={`${UI} ml-[5px] tracking-[-0.3px] text-[#8b8b8b]`}>{"HTCloud Designer[3.37.3.8] - C:\\LocalDev\\HBOX Project\\Dam Project Dam.hctdes"}</span>
        </div>
        <div className={`${UI} flex h-[23px] items-center gap-[19px] pl-[13px] pt-px`}>
          {MENU.map(([label, cls]) => <span key={label} className={cls}>{label}</span>)}
        </div>
        <Toolbar1 />
        <Toolbar2 />
      </div>
      <div className="flex min-h-0 flex-1 gap-[6px]">
        <ProjectTree />
        <Workspace />
      </div>
      <DataGroupDialog />
      <Markup />
    </div>
  );
}
